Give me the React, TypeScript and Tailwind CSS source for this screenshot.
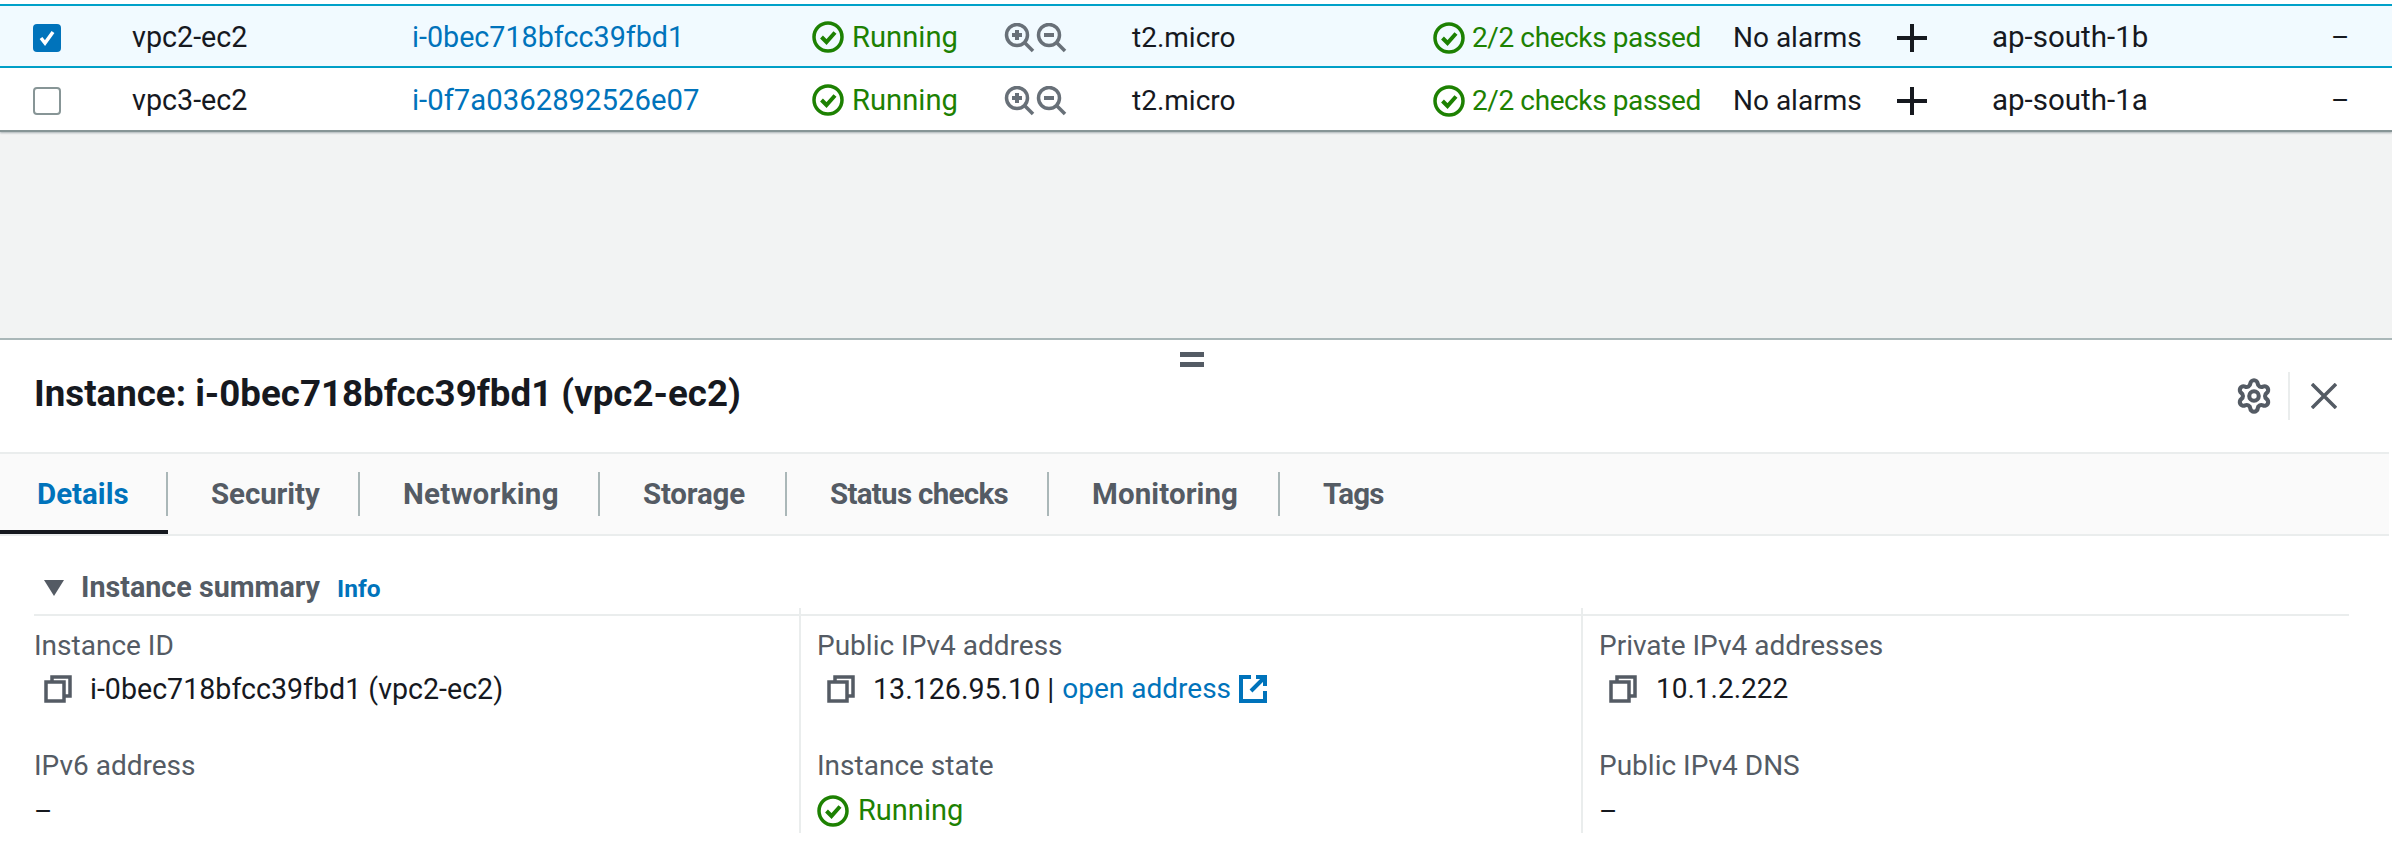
import { Settings } from 'lucide-react'

const font = { ember: "font-['Roboto',sans-serif]" }

function StatusIcon() {
  return (
    <svg width="32" height="32" viewBox="0 0 32 32" fill="none" stroke="#1d8102" strokeWidth="3.5" className="shrink-0">
      <circle cx="16" cy="16" r="14" />
      <path d="M9.5 16l5 5 8.5-9.5" strokeWidth="4" />
    </svg>
  )
}

function ZoomIcons() {
  return (
    <svg width="64" height="30" viewBox="0 0 64 30" fill="none" stroke="#687078" strokeWidth="3.5">
      <circle cx="13" cy="12" r="10.5" />
      <path d="M21 20l8 8" />
      <path d="M13 7v10M8 12h10" strokeWidth="4" />
      <circle cx="45" cy="12" r="10.5" />
      <path d="M53 20l8 8" />
      <path d="M40 12h10" strokeWidth="4" />
    </svg>
  )
}

function CopyIcon() {
  return (
    <svg width="28" height="28" viewBox="0 0 28 28" fill="none" stroke="#545b64" strokeWidth="3.5" className="shrink-0">
      <path d="M8 7V2h18v19h-6" />
      <rect x="2" y="7" width="18" height="19" />
    </svg>
  )
}

function ExternalIcon() {
  return (
    <svg width="28" height="28" viewBox="0 0 28 28" fill="none" stroke="#0073bb" strokeWidth="4" className="shrink-0">
      <path d="M12 2H2v24h24V16" />
      <path d="M17 2h9v9M26 2L12 16" />
    </svg>
  )
}

function Row({ selected, name, id, zone }: { selected: boolean; name: string; id: string; zone: string }) {
  return (
    <div
      className={`grid h-[64px] grid-cols-[132px_280px_400px_192px_128px_301px_300px_164px_95px_339px_61px] items-center pt-[3px] ${
        selected ? 'border-y-2 border-[#00a1c9] bg-[#f1faff]' : 'border-b-2 border-[#879596] bg-white shadow-[0_1px_2px_rgba(0,28,36,0.3)]'
      }`}
    >
      <div className="pl-[33px]">
        {selected ? (
          <div className="flex h-[28px] w-[28px] items-center justify-center rounded-[4px] bg-[#0073bb]">
            <svg width="18" height="18" viewBox="0 0 18 18" fill="none" stroke="white" strokeWidth="3.5">
              <path d="M3 9l4 5 8-11" />
            </svg>
          </div>
        ) : (
          <div className="h-[28px] w-[28px] rounded-[4px] border-2 border-[#879596] bg-white" />
        )}
      </div>
      <div className="text-[28.7px]">{name}</div>
      <div className={`text-[#0073bb] ${selected ? 'text-[28.7px]' : 'text-[29.3px]'}`}>{id}</div>
      <div className="flex items-center gap-[8px] text-[29.2px] text-[#1d8102]">
        <StatusIcon />
        Running
      </div>
      <div className="flex items-center">
        <ZoomIcons />
      </div>
      <div>t2.micro</div>
      <div className="flex items-center gap-[7px] whitespace-nowrap text-[#1d8102]">
        <StatusIcon />
        <span className="tracking-[-0.4px]">2/2 checks passed</span>
      </div>
      <div>No alarms</div>
      <div>
        <svg width="30" height="28" viewBox="0 0 30 28" stroke="#16191f" strokeWidth="4">
          <path d="M0 14h30M15 0v28" />
        </svg>
      </div>
      <div className="text-[29.5px]">{zone}</div>
      <div>–</div>
    </div>
  )
}

const tabs = [
  { label: 'Details', width: 'w-[168px]', spacing: '' },
  { label: 'Security', width: 'w-[192px]', spacing: 'tracking-[-0.1px]' },
  { label: 'Networking', width: 'w-[240px]', spacing: 'tracking-[0.3px]' },
  { label: 'Storage', width: 'w-[187px]', spacing: 'tracking-[-0.2px]' },
  { label: 'Status checks', width: 'w-[262px]', spacing: 'tracking-[-0.7px]' },
  { label: 'Monitoring', width: 'w-[231px]', spacing: 'tracking-[0.1px]' },
  { label: 'Tags', width: 'w-[120px]', spacing: 'tracking-[-0.8px]' },
]

function Label({ children }: { children: string }) {
  return <div className="h-[36px] leading-[36px] text-[#545b64]">{children}</div>
}

export default function App() {
  return (
    <div className={`flex h-[844px] w-[2392px] flex-col overflow-hidden bg-[#f2f3f3] text-[28px] text-[#16191f] ${font.ember}`}>
      <div className="bg-white pt-[4px]">
        <Row selected name="vpc2-ec2" id="i-0bec718bfcc39fbd1" zone="ap-south-1b" />
        <Row selected={false} name="vpc3-ec2" id="i-0f7a0362892526e07" zone="ap-south-1a" />
      </div>

      <div className="mt-[206px] flex-1 border-t-2 border-[#aab7b8] bg-white pr-[3px]">
        <div className="relative flex h-[112px] items-center justify-between pr-[52px] pl-[34px]">
          <div className="absolute top-[12px] left-[1180px] flex flex-col gap-[5px]">
            <div className="h-[5px] w-[24px] bg-[#545b64]" />
            <div className="h-[5px] w-[24px] bg-[#545b64]" />
          </div>
          <h2 className="pb-[4px] text-[36.7px] font-bold">Instance: i-0bec718bfcc39fbd1 (vpc2-ec2)</h2>
          <div className="flex items-center">
            <Settings size={38} strokeWidth={2.6} color="#545b64" />
            <div className="mr-[21px] ml-[15px] h-[48px] w-[2px] bg-[#eaeded]" />
            <svg width="26" height="26" viewBox="0 0 26 26" stroke="#545b64" strokeWidth="3.5">
              <path d="M1 1l24 24M25 1L1 25" />
            </svg>
          </div>
        </div>

        <div className="flex h-[84px] items-center border-y-2 border-[#eaeded] bg-[#fafafa] text-[29.5px] font-bold text-[#545b64]">
          {tabs.map((tab, i) => (
            <div
              key={tab.label}
              className={`relative flex h-full items-center ${tab.width} ${tab.spacing} ${i === 0 ? 'pl-[37px] text-[#0073bb]' : 'pl-[43px]'}`}
            >
              {tab.label}
              {i < tabs.length - 1 && <div className="absolute top-[18px] right-0 h-[44px] w-[2px] bg-[#aab7b8]" />}
              {i === 0 && <div className="absolute right-0 bottom-0 left-0 h-[4px] bg-[#16191f]" />}
            </div>
          ))}
        </div>

        <div className="pr-[40px] pl-[34px]">
          <div className="flex h-[80px] items-center gap-[17px] border-b-2 border-[#eaeded] pt-[26px] pl-[10px]">
            <svg width="20" height="16" viewBox="0 0 20 16" fill="#545b64">
              <path d="M0 0h20L10 16z" />
            </svg>
            <div className="flex items-baseline gap-[17px]">
              <span className="text-[28.7px] font-bold text-[#545b64]">Instance summary</span>
              <span className="text-[24.5px] font-bold text-[#0073bb]">Info</span>
            </div>
          </div>

          <div className="-mt-[8px] grid grid-cols-[765px_782px_1fr]">
            <div className="pt-[20px]">
              <Label>Instance ID</Label>
              <div className="mt-[7px] flex h-[36px] items-center gap-[18px] pl-[10px] text-[28.6px]">
                <CopyIcon />
                i-0bec718bfcc39fbd1 (vpc2-ec2)
              </div>
              <div className="mt-[41px]">
                <Label>IPv6 address</Label>
              </div>
              <div className="mt-[7px]">–</div>
            </div>

            <div className="border-l-2 border-[#eaeded] pt-[20px] pl-[16px]">
              <Label>Public IPv4 address</Label>
              <div className="mt-[7px] flex h-[36px] items-center gap-[18px] pl-[10px]">
                <CopyIcon />
                <span className="flex items-center gap-[8px]">
                  <span className="text-[28.6px]">13.126.95.10 |</span>
                  <span className="text-[#0073bb]">open address</span>
                  <ExternalIcon />
                </span>
              </div>
              <div className="mt-[41px]">
                <Label>Instance state</Label>
              </div>
              <div className="mt-[5px] flex items-center gap-[9px] text-[29px] text-[#1d8102]">
                <StatusIcon />
                Running
              </div>
            </div>

            <div className="border-l-2 border-[#eaeded] pt-[20px] pl-[16px]">
              <Label>Private IPv4 addresses</Label>
              <div className="mt-[7px] flex h-[36px] items-center gap-[19px] pl-[10px]">
                <CopyIcon />
                10.1.2.222
              </div>
              <div className="mt-[41px]">
                <Label>Public IPv4 DNS</Label>
              </div>
              <div className="mt-[7px]">–</div>
            </div>
          </div>
        </div>
      </div>
    </div>
  )
}
